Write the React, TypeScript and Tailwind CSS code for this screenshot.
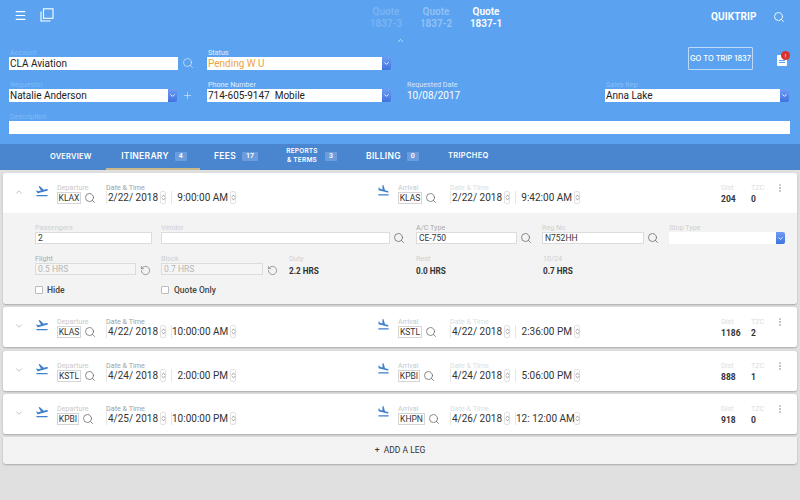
import { ChevronDown, ChevronUp, ChevronsUpDown, Menu, MoreVertical, Plus, RotateCcw, Search } from "lucide-react"
import { MdFlightLand, MdFlightTakeoff } from "react-icons/md"

const legs = [
  { from: "KLAS", fromW: "w-[24px]", date: "4/22/ 2018", time: "10:00:00 AM", to: "KSTL", toW: "w-[24px]", toDate: "4/22/ 2018", toTime: "2:36:00 PM", dist: "1186", tzc: "2" },
  { from: "KSTL", fromW: "w-[24px]", date: "4/24/ 2018", time: "2:00:00 PM", to: "KPBI", toW: "w-[22px]", toDate: "4/24/ 2018", toTime: "5:06:00 PM", dist: "888", tzc: "1" },
  { from: "KPBI", fromW: "w-[22px]", date: "4/25/ 2018", time: "10:00:00 PM", to: "KHPN", toW: "w-[27px]", toDate: "4/26/ 2018", toTime: "12: 12:00 AM", dist: "918", tzc: "0" },
]

function SelectButton() {
  return (
    <div className="flex w-[9px] shrink-0 items-center justify-center self-stretch rounded-r-[2px] bg-gradient-to-b from-[#6f9df5] to-[#3f72e0]">
      <ChevronDown className="h-[7px] w-[7px] text-white" strokeWidth={3} />
    </div>
  )
}

function HeaderField({ label, value, labelClass, width, select, valueClass }: { label: string; value: string; labelClass: string; width: string; select?: boolean; valueClass?: string }) {
  return (
    <div className={width}>
      <div className={`h-[9px] pl-px text-[7.2px] leading-[9px] ${labelClass}`}>{label}</div>
      <div className="flex h-[13px]">
        <div className={`min-w-0 flex-1 bg-white pl-px text-[10px] leading-[13px] whitespace-pre ${valueClass ?? "text-[#222]"}`}>{value}</div>
        {select && <SelectButton />}
      </div>
    </div>
  )
}

function Stepper() {
  return (
    <div className="ml-[2px] flex h-[13px] w-[6px] shrink-0 items-center justify-center rounded-[2px] border border-[#e2e2e2] bg-white">
      <ChevronsUpDown className="h-[9px] w-[7px] shrink-0 text-[#555]" strokeWidth={2} />
    </div>
  )
}

function DateTime({ label, labelClass, date, time }: { label: string; labelClass: string; date: string; time: string }) {
  return (
    <div className="w-[140px]">
      <div className={`h-[9px] text-[7.2px] leading-[9px] ${labelClass}`}>{label}</div>
      <div className="mt-[-1px] flex items-center">
        <div className="h-[13px] w-[52px] shrink-0 border-l border-[#e6e6e6] text-right text-[10px] leading-[13px] whitespace-nowrap text-[#333]">{date}</div>
        <Stepper />
        <div className="ml-[5px] h-[13px] w-[57px] shrink-0 border-l border-[#e6e6e6] text-right text-[10px] leading-[13px] whitespace-nowrap text-[#333]">{time}</div>
        <Stepper />
      </div>
    </div>
  )
}

function Airport({ label, code, boxWidth, colWidth }: { label: string; code: string; boxWidth: string; colWidth: string }) {
  return (
    <div className={colWidth}>
      <div className="h-[9px] text-[7.2px] leading-[9px] text-[#c9c9c9]">{label}</div>
      <div className="flex items-center">
        <div className={`flex h-[12px] items-center justify-center border border-[#d5d5d5] bg-white text-[8.5px] text-[#333] ${boxWidth}`}>{code}</div>
        <Search className="ml-[3px] h-[12px] w-[12px] text-[#666]" strokeWidth={1.5} />
      </div>
    </div>
  )
}

function LegHeader({ open, from, fromW, date, time, to, toW, toDate, toTime, dist, tzc }: { open?: boolean; from: string; fromW: string; date: string; time: string; to: string; toW: string; toDate: string; toTime: string; dist: string; tzc: string }) {
  return (
    <div className="flex h-[40px] items-start bg-white pt-[10px]">
      <div className="flex w-[32px] justify-center pt-[4px] text-[#999]">
        {open ? <ChevronUp className="h-[10px] w-[10px]" strokeWidth={1.5} /> : <ChevronDown className="h-[10px] w-[10px]" strokeWidth={1.5} />}
      </div>
      <div className="w-[22px] pt-[1px]">
        <MdFlightTakeoff className="h-[14px] w-[14px] text-[#3f7fcb]" />
      </div>
      <Airport label="Departure" code={from} boxWidth={fromW} colWidth="w-[49px]" />
      <DateTime label="Date & Time" labelClass="text-[#a0a0a0]" date={date} time={time} />
      <div className="ml-[131px] w-[21px] pt-[1px]">
        <MdFlightLand className="h-[13px] w-[13px] text-[#3f7fcb]" />
      </div>
      <Airport label="Arrival" code={to} boxWidth={toW} colWidth="w-[52px]" />
      <DateTime label="Date & Time" labelClass="text-[#dcdcdc]" date={toDate} time={toTime} />
      <div className="ml-[131px] w-[30px]">
        <div className="h-[9px] text-[7.2px] leading-[9px] text-[#dcdcdc]">Dist</div>
        <div className="mt-[2px] text-[8.5px] leading-[10px] font-bold text-[#333]">{dist}</div>
      </div>
      <div className="w-[24px]">
        <div className="h-[9px] text-[7.2px] leading-[9px] text-[#dcdcdc]">TZC</div>
        <div className="mt-[2px] text-[8.5px] leading-[10px] font-bold text-[#333]">{tzc}</div>
      </div>
      <MoreVertical className="h-[10px] w-[10px] text-[#aaa]" strokeWidth={2.5} />
    </div>
  )
}

function DetailInput({ label, value, width, labelClass = "text-[#cfcfcf]", muted }: { label: string; value: string; width: string; labelClass?: string; muted?: boolean }) {
  return (
    <div className={width}>
      <div className={`h-[9px] text-[7.2px] leading-[9px] ${labelClass}`}>{label}</div>
      <div className={`h-[12px] border border-[#dcdcdc] pl-[2px] text-[8.5px] leading-[11px] ${muted ? "bg-[#f5f5f5] text-[#b5b5b5]" : "bg-white text-[#333]"}`}>{value}</div>
    </div>
  )
}

function Stat({ label, value, width }: { label: string; value: string; width: string }) {
  return (
    <div className={width}>
      <div className="h-[9px] text-[7.2px] leading-[9px] text-[#cfcfcf]">{label}</div>
      <div className="mt-[3px] text-[8.2px] leading-[10px] font-bold text-[#333]">{value}</div>
    </div>
  )
}

function DetailSearch({ width }: { width: string }) {
  return (
    <div className={`pt-[9px] pl-[3px] ${width}`}>
      <Search className="h-[12px] w-[12px] text-[#666]" strokeWidth={1.5} />
    </div>
  )
}

function Tab({ label, count, width }: { label: string; count?: string; width: string }) {
  return (
    <div className={`flex h-full items-center border-b-2 border-transparent ${width}`}>
      <span className="font-['Inter',sans-serif] text-[8.5px] font-semibold tracking-[0.3px] text-white">{label}</span>
      {count && <span className="ml-[6px] rounded-[1px] bg-[#6b9ddc] px-[4px] text-[7px] leading-[9px] font-semibold text-white">{count}</span>}
    </div>
  )
}

export default function App() {
  return (
    <div className="flex h-[500px] w-[800px] flex-col overflow-hidden bg-[#e0e0e0] font-['Roboto',sans-serif]">
      <div className="h-[144px] bg-[#5ba3f0] pl-[9px]">
        <div className="flex h-[36px] items-start">
          <div className="flex w-[352px] items-center pt-[8px] pl-[5px] text-white">
            <Menu className="h-[13px] w-[13px]" strokeWidth={2.2} />
            <svg className="ml-[13px] h-[14px] w-[14px]" viewBox="0 0 14 14" fill="none" stroke="currentColor" strokeWidth="1.1">
              <rect x="3.5" y="0.8" width="9.5" height="9.5" />
              <path d="M1 3.5 V13 H10.5" />
            </svg>
          </div>
          <div className="flex pt-[6px] text-center text-[10px] leading-[12px] font-semibold">
            <div className="w-[50px] text-white/20">Quote<br />1837-3</div>
            <div className="w-[50px] text-white/35">Quote<br />1837-2</div>
            <div className="w-[50px] text-white">Quote<br />1837-1</div>
          </div>
          <div className="ml-[200px] flex items-center pt-[9px] text-white">
            <span className="text-[10px] font-bold tracking-[0.1px]">QUIKTRIP</span>
            <Search className="ml-[16px] h-[12px] w-[12px]" strokeWidth={1.8} />
          </div>
        </div>
        <div className="flex h-[9px] justify-center pr-[9px]">
          <ChevronUp className="h-[9px] w-[9px] text-white/80" strokeWidth={2} />
        </div>
        <div className="flex h-[25px] items-end">
          <div className="flex w-[198px] items-end">
            <HeaderField label="Account" value="CLA Aviation" labelClass="text-white/25" width="w-[169px]" />
            <Search className="mb-[1px] ml-[4px] h-[12px] w-[12px] text-white/70" strokeWidth={1.5} />
          </div>
          <HeaderField label="Status" value="Pending W U" labelClass="text-white/80" width="w-[184px]" select valueClass="text-[#eda33b]" />
          <div className="ml-[297px] flex h-[23px] w-[65px] items-center justify-center rounded-[1px] border border-white/60 font-['Inter',sans-serif] text-[7.5px] font-medium whitespace-nowrap text-white">GO TO TRIP 1837</div>
          <div className="relative mb-[4px] ml-[24px] h-[11px] w-[10px] rounded-[1px] bg-white">
            <div className="mx-[2px] mt-[5px] h-px bg-[#5ba3f0]" />
            <div className="mx-[2px] mt-[1px] h-px bg-[#5ba3f0]" />
            <div className="absolute top-[-4px] right-[-3px] flex h-[9px] w-[9px] items-center justify-center rounded-full bg-[#d9342b] text-[6px] leading-none text-white">!</div>
          </div>
        </div>
        <div className="mt-[10px] flex items-end">
          <div className="flex w-[198px] items-end">
            <HeaderField label="Requestor" value="Natalie Anderson" labelClass="text-white/25" width="w-[168px]" select />
            <Plus className="mb-[1px] ml-[5px] h-[11px] w-[11px] text-white/70" strokeWidth={1.5} />
          </div>
          <HeaderField label="Phone Number" value="714-605-9147  Mobile" labelClass="text-white/80" width="w-[184px]" select />
          <div className="ml-[16px] w-[198px]">
            <div className="h-[9px] text-[7.2px] leading-[9px] text-white/75">Requested Date</div>
            <div className="text-[10px] leading-[13px] text-white">10/08/2017</div>
          </div>
          <HeaderField label="Sales Rep" value="Anna Lake" labelClass="text-white/30" width="w-[184px]" select />
        </div>
        <div className="mt-[10px] pr-[10px]">
          <div className="h-[9px] pl-px text-[7.2px] leading-[9px] text-white/25">Description</div>
          <div className="h-[13px] bg-white" />
        </div>
      </div>

      <div className="flex h-[26px] items-stretch bg-[#4a86cf] pl-[50px]">
        <div className="flex w-[56px] items-center border-b-2 border-transparent pt-px font-['Inter',sans-serif] text-[7.5px] font-semibold tracking-[0.2px] text-white">OVERVIEW</div>
        <div className="flex w-[94px] items-center justify-center border-b-2 border-[#c9b98a] pl-[2px]">
          <span className="font-['Inter',sans-serif] text-[8.5px] font-semibold tracking-[0.3px] text-white">ITINERARY</span>
          <span className="ml-[6px] rounded-[1px] bg-[#6b9ddc] px-[4px] text-[7px] leading-[9px] font-semibold text-white">4</span>
        </div>
        <div className="w-[14px]" />
        <Tab label="FEES" count="17" width="w-[71px]" />
        <div className="flex w-[81px] items-center border-b-2 border-transparent">
          <span className="w-[34px] text-center font-['Inter',sans-serif] text-[6.5px] leading-[9px] font-semibold tracking-[0.2px] whitespace-nowrap text-white">REPORTS<br />&amp; TERMS</span>
          <span className="ml-[6px] rounded-[1px] bg-[#6b9ddc] px-[4px] text-[7px] leading-[9px] font-semibold text-white">3</span>
        </div>
        <Tab label="BILLING" count="0" width="w-[82px]" />
        <div className="flex items-center border-b-2 border-transparent font-['Inter',sans-serif] text-[7.5px] font-semibold tracking-[0.3px] text-white">TRIPCHEQ</div>
      </div>

      <div className="flex flex-col gap-[3px] px-[3px] pt-[3px]">
        <div className="overflow-hidden rounded-[3px] shadow-[0_1px_2px_rgba(0,0,0,0.25)]">
          <LegHeader open from="KLAX" fromW="w-[24px]" date="2/22/ 2018" time="9:00:00 AM" to="KLAS" toW="w-[24px]" toDate="2/22/ 2018" toTime="9:42:00 AM" dist="204" tzc="0" />
          <div className="h-[91px] bg-[#f3f3f3] pt-[10px] pl-[32px]">
            <div className="flex items-start">
              <DetailInput label="Passengers" value="2" width="w-[117px]" />
              <div className="w-[9px]" />
              <DetailInput label="Vendor" value="" width="w-[229px]" />
              <DetailSearch width="w-[26px]" />
              <DetailInput label="A/C Type" value="CE-750" width="w-[101px]" labelClass="text-[#aaa]" />
              <DetailSearch width="w-[25px]" />
              <DetailInput label="Reg No" value="N752HH" width="w-[102px]" />
              <DetailSearch width="w-[25px]" />
              <div className="w-[116px]">
                <div className="h-[9px] text-[7.2px] leading-[9px] text-[#cfcfcf]">Stop Type</div>
                <div className="flex h-[12px]">
                  <div className="flex-1 bg-white" />
                  <SelectButton />
                </div>
              </div>
            </div>
            <div className="mt-[10px] flex items-start">
              <DetailInput label="Flight" value="0.5 HRS" width="w-[101px]" labelClass="text-[#aaa]" muted />
              <div className="w-[25px] pt-[11px] pl-[4px]"><RotateCcw className="h-[11px] w-[11px] text-[#777]" strokeWidth={1.5} /></div>
              <DetailInput label="Block" value="0.7 HRS" width="w-[102px]" muted />
              <div className="w-[26px] pt-[11px] pl-[4px]"><RotateCcw className="h-[11px] w-[11px] text-[#777]" strokeWidth={1.5} /></div>
              <Stat label="Duty" value="2.2 HRS" width="w-[127px]" />
              <Stat label="Rest" value="0.0 HRS" width="w-[127px]" />
              <Stat label="10/24" value="0.7 HRS" width="w-[100px]" />
            </div>
            <div className="mt-[8px] flex items-center text-[8.5px] text-[#444]">
              <div className="flex w-[126px] items-center">
                <div className="h-[8px] w-[8px] rounded-[1px] border border-[#bbb] bg-white" />
                <span className="ml-[4px] font-medium">Hide</span>
              </div>
              <div className="h-[8px] w-[8px] rounded-[1px] border border-[#bbb] bg-white" />
              <span className="ml-[5px] font-medium">Quote Only</span>
            </div>
          </div>
        </div>

        {legs.map((leg, i) => (
          <div key={leg.from} className={`overflow-hidden rounded-[3px] shadow-[0_1px_2px_rgba(0,0,0,0.25)] ${i === 1 ? "mt-px" : ""}`}>
            <LegHeader {...leg} />
          </div>
        ))}

        <div className="flex h-[27px] items-center justify-center rounded-b-[3px] bg-[#f3f3f3] text-[8.5px] text-[#333] shadow-[0_1px_2px_rgba(0,0,0,0.25)]">
          +&nbsp;&nbsp;ADD A LEG
        </div>
      </div>
    </div>
  )
}
